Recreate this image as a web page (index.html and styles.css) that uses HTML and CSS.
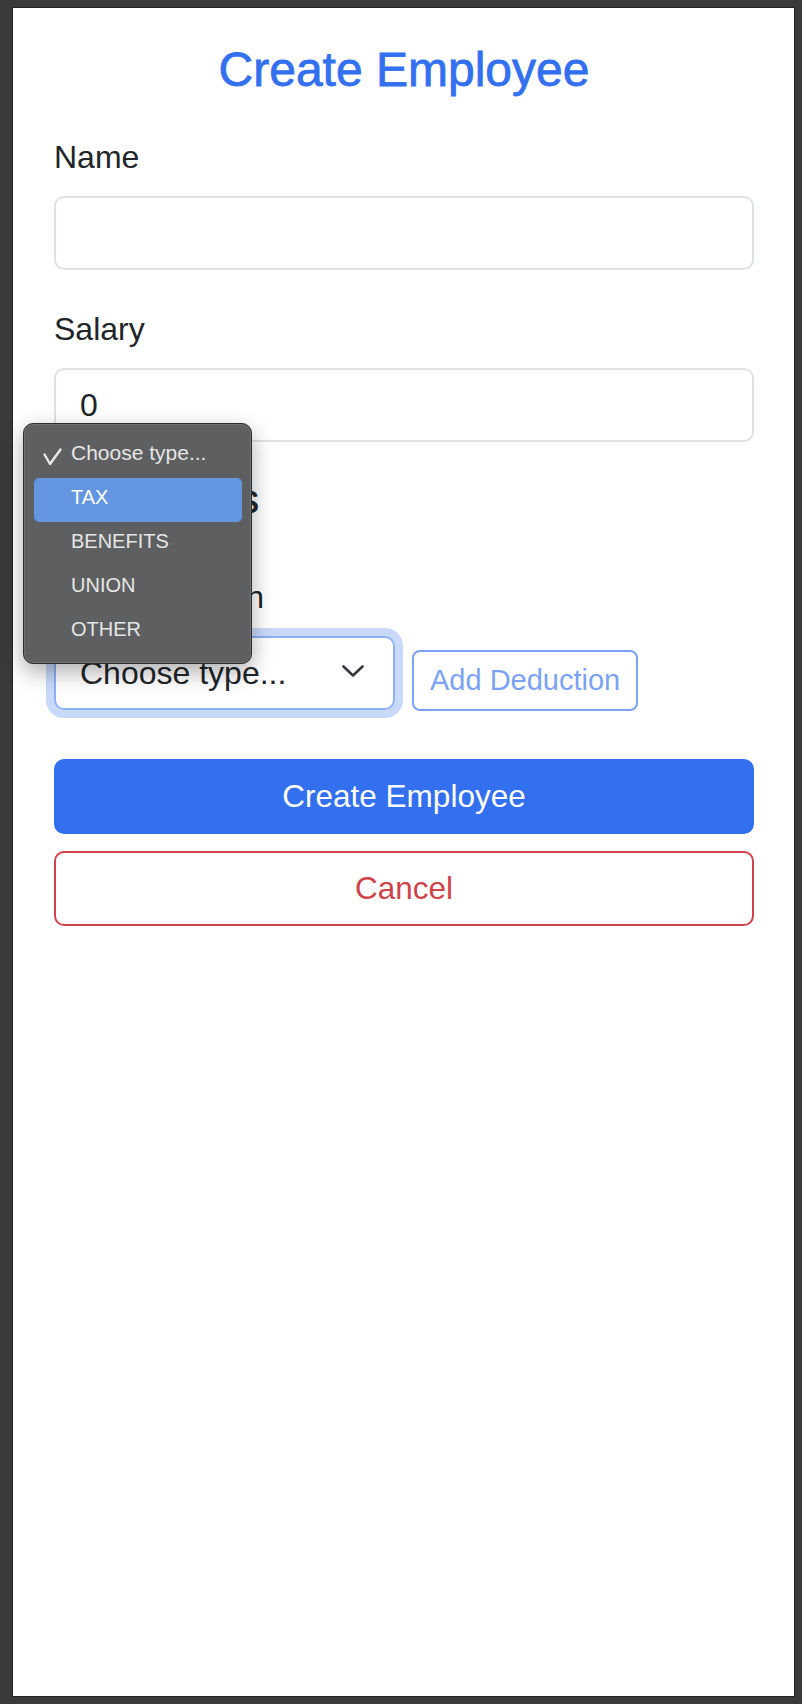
FILE: index.html
```html
<!DOCTYPE html>
<html lang="en">
<head>
<meta charset="utf-8">
<title>Create Employee</title>
<link rel="stylesheet" href="styles.css">
</head>
<body>
<div class="page">
  <h1 class="title">Create Employee</h1>
  <form class="form">
    <div class="field">
      <label class="label">Name</label>
      <div class="input"></div>
    </div>
    <div class="field">
      <label class="label">Salary</label>
      <div class="input">0</div>
    </div>
    <h2 class="section">Deductions</h2>
    <div class="field">
      <label class="label">Add Deduction</label>
      <div class="deduction-row">
        <div class="select">
          <span>Choose type...</span>
          <svg class="chevron" width="22" height="12" viewBox="0 0 22 12"><polyline points="1.5,1.5 11,10.5 20.5,1.5" fill="none" stroke="#343a40" stroke-width="2.6" stroke-linecap="round" stroke-linejoin="round"/></svg>
        </div>
        <button type="button" class="btn-add">Add Deduction</button>
      </div>
    </div>
    <div class="actions">
      <button type="button" class="btn-primary">Create Employee</button>
      <button type="button" class="btn-cancel">Cancel</button>
    </div>
  </form>

  <div class="menu">
    <div class="menu-item checked">
      <svg class="check" width="20" height="20" viewBox="0 0 20 20"><polyline points="1.5,7.5 7,17 17.5,2.5" fill="none" stroke="#e8e8e8" stroke-width="2.4" stroke-linecap="round" stroke-linejoin="round"/></svg>
      Choose type...
    </div>
    <div class="menu-item active">TAX</div>
    <div class="menu-item">BENEFITS</div>
    <div class="menu-item">UNION</div>
    <div class="menu-item">OTHER</div>
  </div>
</div>
</body>
</html>
```

FILE: styles.css
```css
html, body {
  margin: 0;
  padding: 0;
}

body {
  background: #3a3a3a;
  font-family: "Liberation Sans", Arial, sans-serif;
  color: #212529;
}

.page {
  position: relative;
  box-sizing: border-box;
  width: 781px;
  height: 1688px;
  margin: 8px 8px 8px 13px;
  padding: 34px 40px 0 41px;
  background: #ffffff;
  box-shadow: 0 0 0 1px #222222;
}

.title {
  margin: 0 0 41px;
  font-size: 48px;
  line-height: 56px;
  font-weight: 400;
  text-align: center;
  color: #3370f0;
  -webkit-text-stroke: 0.8px #3370f0;
}

.form {
  margin: 0;
}

.field + .field {
  margin-top: 41px;
}

.label {
  display: block;
  margin-bottom: 21px;
  font-size: 32px;
  line-height: 36px;
}

.input {
  box-sizing: border-box;
  display: flex;
  align-items: center;
  height: 74px;
  padding: 0 24px;
  border: 2px solid #dee2e6;
  border-radius: 10px;
  font-size: 32px;
  color: #212529;
}

.section {
  margin: 33px 0 56px;
  font-size: 41px;
  line-height: 48px;
  font-weight: 400;
  -webkit-text-stroke: 0.6px #212529;
}

.deduction-row {
  display: flex;
  align-items: flex-end;
  gap: 17px;
}

.select {
  box-sizing: border-box;
  display: flex;
  align-items: center;
  justify-content: space-between;
  width: 341px;
  height: 74px;
  padding: 0 29px 0 24px;
  border: 2px solid #8cb0f6;
  border-radius: 10px;
  box-shadow: 0 0 0 8px #c8d9fb;
  font-size: 32px;
  color: #212529;
}

.chevron {
  display: block;
  margin-top: -4px;
}

.btn-add {
  box-sizing: border-box;
  height: 61px;
  padding: 0 16px;
  border: 2px solid #7aa2f5;
  border-radius: 8px;
  background: #ffffff;
  font-family: inherit;
  font-size: 29px;
  color: #7aa2f5;
  margin-bottom: -1px;
}

.actions {
  display: flex;
  flex-direction: column;
  gap: 17px;
  margin-top: 49px;
}

.btn-primary,
.btn-cancel {
  box-sizing: border-box;
  width: 100%;
  height: 75px;
  border-radius: 10px;
  font-family: inherit;
  font-size: 31.5px;
}

.btn-primary {
  border: 2px solid #3370f0;
  background: #3370f0;
  color: #ffffff;
}

.btn-cancel {
  border: 2px solid #d0434a;
  background: #ffffff;
  color: #d0434a;
}

.menu {
  position: absolute;
  left: 10px;
  top: 415px;
  box-sizing: border-box;
  width: 229px;
  height: 241px;
  padding: 10px 9px 9px 10px;
  background: #5e5f60;
  border: 1px solid #2e2e2e;
  border-radius: 10px;
  box-shadow: inset 0 0 0 1px #707172, 0 8px 22px rgba(0, 0, 0, 0.32);
}

.menu-item {
  position: relative;
  height: 44px;
  box-sizing: border-box;
  padding: 0 0 6px 37px;
  border-radius: 5px;
  font-size: 20px;
  line-height: 38px;
  color: #e6e6e6;
}

.menu-item.checked {
  font-size: 21px;
}

.menu-item.active {
  background: #6495e0;
  color: #ffffff;
}

.check {
  position: absolute;
  left: 9px;
  top: 13px;
}
```
